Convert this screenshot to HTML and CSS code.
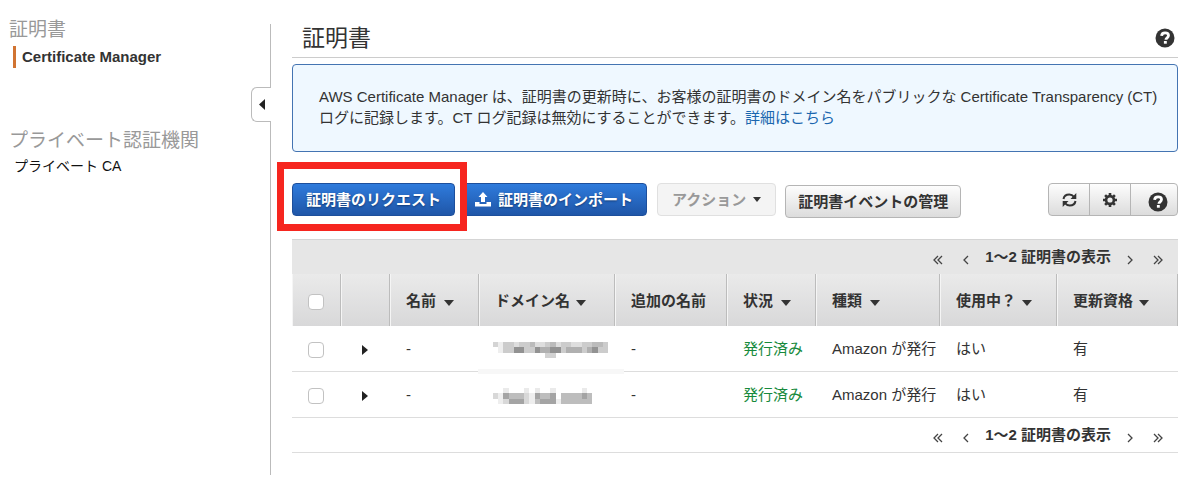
FILE: index.html
```html
<!DOCTYPE html>
<html lang="ja">
<head>
<meta charset="utf-8">
<title>Certificate Manager</title>
<link rel="stylesheet" href="styles.css">
</head>
<body>
<svg class="defs" aria-hidden="true">
  <symbol id="help" viewBox="0 0 20 20">
    <circle cx="10" cy="10" r="9.500" fill="#333"/>
    <path d="M6.600 7.900C6.700 5.800 8.100 4.800 10.100 4.800c2 0 3.400 1.100 3.400 2.800 0 2.200-2.600 2.300-2.600 4.200" fill="none" stroke="#fff" stroke-width="2.800"/>
    <rect x="8.900" y="13" width="2.900" height="2.700" fill="#fff"/>
  </symbol>
  <symbol id="caret" viewBox="0 0 10 6"><path d="M0 0h10L5 6z" fill="#333"/></symbol>
  <symbol id="right" viewBox="0 0 6 10"><path d="M0 0l6 5-6 5z" fill="#222"/></symbol>
  <symbol id="next" viewBox="0 0 6 10"><path d="M1 1l4 4-4 4" fill="none" stroke="#444" stroke-width="1.300"/></symbol>
  <symbol id="prev" viewBox="0 0 6 10"><path d="M5 1L1 5l4 4" fill="none" stroke="#444" stroke-width="1.300"/></symbol>
  <symbol id="last" viewBox="0 0 10 10"><path d="M1 1l4 4-4 4M5 1l4 4-4 4" fill="none" stroke="#444" stroke-width="1.300"/></symbol>
  <symbol id="first" viewBox="0 0 10 10"><path d="M5 1L1 5l4 4M9 1L5 5l4 4" fill="none" stroke="#444" stroke-width="1.300"/></symbol>
</svg>
<div class="page">
  <nav class="sidebar">
    <h2>証明書</h2>
    <a class="active" href="#">Certificate Manager</a>
    <h2 class="second">プライベート認証機関</h2>
    <a class="sub" href="#">プライベート CA</a>
  </nav>
  <button class="collapse" aria-label="サイドバーを閉じる"><svg width="6" height="11" viewBox="0 0 6 11"><path d="M6 0v11L0 5.500z" fill="#222"/></svg></button>
  <main class="main">
    <header class="title">
      <h1>証明書</h1>
      <button class="bare" aria-label="ヘルプ"><svg width="20" height="20"><use href="#help"/></svg></button>
    </header>
    <div class="notice">
      <p>AWS Certificate Manager は、証明書の更新時に、お客様の証明書のドメイン名をパブリックな Certificate Transparency (CT) ログに記録します。CT ログ記録は無効にすることができます。<a href="#">詳細はこちら</a></p>
    </div>
    <div class="toolbar">
      <div class="highlight"><button class="btn primary">証明書のリクエスト</button></div>
      <button class="btn primary"><svg width="16" height="15" viewBox="0 0 16 15"><path d="M8 0l4.500 5H10v5H6V5H3.500zM0 10h4.500v2h7v-2H16v4.500H0z" fill="#fff"/></svg>証明書のインポート</button>
      <button class="btn disabled" disabled>アクション<svg width="8" height="5"><use href="#caret"/></svg></button>
      <button class="btn events">証明書イベントの管理</button>
      <div class="tools">
        <button aria-label="更新"><svg width="15" height="14" viewBox="0 0 15 14"><path d="M1.500 6C2 3 4.500 1.500 7.300 1.500c2 0 3.500.8 4.700 2.300M13.500 8c-.5 3-3 4.500-5.800 4.500-2 0-3.500-.8-4.700-2.300" fill="none" stroke="#333" stroke-width="2"/><path d="M14.300 0v6H8.500zM.7 14V8h5.800z" fill="#333"/></svg></button>
        <button aria-label="設定"><svg width="14" height="14" viewBox="0 0 14 14"><circle cx="7" cy="7" r="3.900" fill="none" stroke="#333" stroke-width="2.600"/><path d="M7 0v3M7 11v3M0 7h3M11 7h3M2.100 2.100l2 2M9.900 9.900l2 2M2.100 11.900l2-2M9.900 4.100l2-2" stroke="#333" stroke-width="2.600"/></svg></button>
        <button class="wide" aria-label="ヘルプ"><svg width="20" height="20"><use href="#help"/></svg></button>
      </div>
    </div>
    <div class="pager top">
      <button class="bare" aria-label="最初"><svg width="10" height="10"><use href="#first"/></svg></button>
      <button class="bare" aria-label="前"><svg width="6" height="10"><use href="#prev"/></svg></button>
      <span>1〜2 証明書の表示</span>
      <button class="bare" aria-label="次"><svg width="6" height="10"><use href="#next"/></svg></button>
      <button class="bare" aria-label="最後"><svg width="10" height="10"><use href="#last"/></svg></button>
    </div>
    <table>
      <colgroup><col class="c-icon"><col class="c-icon"><col class="c-name"><col class="c-domain"><col class="c-extra"><col class="c-name"><col class="c-type"><col class="c-use"><col class="c-renew"></colgroup>
      <thead>
        <tr>
          <th><input type="checkbox" aria-label="すべて選択"></th>
          <th></th>
          <th>名前<svg width="10" height="6"><use href="#caret"/></svg></th>
          <th>ドメイン名<svg class="near" width="10" height="6"><use href="#caret"/></svg></th>
          <th>追加の名前</th>
          <th>状況<svg width="10" height="6"><use href="#caret"/></svg></th>
          <th>種類<svg width="10" height="6"><use href="#caret"/></svg></th>
          <th>使用中？<svg class="near" width="10" height="6"><use href="#caret"/></svg></th>
          <th>更新資格<svg class="near" width="10" height="6"><use href="#caret"/></svg></th>
        </tr>
      </thead>
      <tbody>
        <tr>
          <td><input type="checkbox" aria-label="証明書 1 を選択"></td>
          <td class="expand"><button class="bare" aria-label="展開"><svg width="6" height="10"><use href="#right"/></svg></button></td>
          <td>-</td>
          <td class="masked smudge"><svg width="115" height="16" viewBox="0 0 22 3" preserveAspectRatio="none" shape-rendering="crispEdges">
            <path d="M0 0h1v1H0z" fill="#d4d4d4"/><path d="M1 0h1v2H1z" fill="#eee"/><path d="M2 0h20v2H2z" fill="#ccc"/>
            <path d="M4 0h1v1H4zM8 0h2v1H8zM12 0h1v1h-1zM15 0h2v1h-2z" fill="#dedede"/><path d="M7 0h1v1H7zM11 0h1v1h-1zM19 0h2v1h-2z" fill="#bbb"/>
            <path d="M4 1h2v1H4zM8 1h1v1H8zM11 1h2v1h-2zM19 1h1v1h-1z" fill="#929292"/><path d="M9 1h2v1H9zM14 1h3v1h-3zM18 1h1v1h-1z" fill="#b0b0b0"/>
            <path d="M10 2h2v1h-2z" fill="#d2d2d2"/></svg></td>
          <td>-</td>
          <td class="ok">発行済み</td>
          <td>Amazon が発行</td>
          <td>はい</td>
          <td>有</td>
        </tr>
        <tr>
          <td><input type="checkbox" aria-label="証明書 2 を選択"></td>
          <td class="expand"><button class="bare" aria-label="展開"><svg width="6" height="10"><use href="#right"/></svg></button></td>
          <td>-</td>
          <td class="masked"><svg width="99" height="16" viewBox="0 0 19 3" preserveAspectRatio="none" shape-rendering="crispEdges">
            <path d="M2 0h1v1H2zM6 0h1v1H6zM8 0h1v1H8zM11 0h1v1h-1zM17 0h1v1h-1z" fill="#eaeaea"/>
            <path d="M0 1h1v1H0z" fill="#d8d8d8"/><path d="M1 1h1v2H1zM7 1h1v2H7zM12 2h1v1h-1z" fill="#eee"/>
            <path d="M2 1h5v2H2zM8 1h4v2H8zM13 1h6v2h-6z" fill="#bdbdbd"/><path d="M6 1h1v2H6zM2 2h1v1H2z" fill="#d8d8d8"/>
            <path d="M2 1h1v1H2zM8 1h1v1H8zM11 1h1v2h-1zM17 1h1v1h-1zM3 2h3v1H3zM9 2h2v1H9z" fill="#a4a4a4"/></svg></td>
          <td>-</td>
          <td class="ok">発行済み</td>
          <td>Amazon が発行</td>
          <td>はい</td>
          <td>有</td>
        </tr>
      </tbody>
    </table>
    <div class="pager">
      <button class="bare" aria-label="最初"><svg width="10" height="10"><use href="#first"/></svg></button>
      <button class="bare" aria-label="前"><svg width="6" height="10"><use href="#prev"/></svg></button>
      <span>1〜2 証明書の表示</span>
      <button class="bare" aria-label="次"><svg width="6" height="10"><use href="#next"/></svg></button>
      <button class="bare" aria-label="最後"><svg width="10" height="10"><use href="#last"/></svg></button>
    </div>
  </main>
</div>
</body>
</html>
```
FILE: styles.css
```css
* { box-sizing: border-box; }
body {
  margin: 0;
  background: #fff;
  color: #333;
  font: 15px/20px "Liberation Sans", "Noto Sans CJK JP", sans-serif;
}
button { font: inherit; color: inherit; cursor: pointer; }
svg { display: block; }
.defs { position: absolute; width: 0; height: 0; }
.bare { display: flex; padding: 0; border: 0; background: none; }

.page { display: flex; padding: 24px 22px 12px 0; }

.sidebar {
  flex: none;
  display: flex;
  flex-direction: column;
  align-items: flex-start;
  width: 270px;
  padding-left: 9px;
}
.sidebar h2 {
  margin: -7px 0 3px;
  color: #999;
  font-size: 19px;
  font-weight: 400;
  line-height: 26px;
}
.sidebar h2.second { margin: 60px 0 0; }
.sidebar a { color: #111; text-decoration: none; }
.sidebar a.active {
  margin-left: 4px;
  padding-left: 6px;
  border-left: 3px solid #d17432;
  color: #333;
  font-weight: 700;
  line-height: 22px;
}
.sidebar a.sub { margin-left: 5px; font-size: 14px; line-height: 24px; }

.collapse {
  display: flex;
  align-items: center;
  justify-content: flex-end;
  flex: none;
  width: 20px;
  height: 35px;
  margin: 63px -1px 0 -19px;
  padding: 0 6px 0 0;
  border: 1px solid #bbb;
  border-right: 0;
  border-radius: 6px 0 0 6px;
  background: #fff;
  position: relative;
}

.main {
  flex: 1;
  min-width: 0;
  min-height: 451px;
  padding-left: 21px;
  border-left: 1px solid #bbb;
}
.title {
  display: flex;
  align-items: center;
  justify-content: space-between;
  height: 34px;
  padding: 0 3px 6px 10px;
  border-bottom: 1px solid #ccc;
}
h1 { margin: 0; font-size: 23px; font-weight: 400; line-height: 28px; }

.notice {
  margin: 6px 0 31px;
  padding: 21px 12px 23px 26px;
  border: 1px solid #4474b2;
  border-radius: 4px;
  background: #eff8ff;
  line-height: 21px;
}
.notice p { margin: 0; }
.notice a { display: inline-block; color: #1a66ae; text-decoration: none; }

.toolbar { display: flex; align-items: flex-start; height: 56px; }
.btn {
  display: flex;
  align-items: center;
  justify-content: center;
  height: 33px;
  padding: 0 13px;
  border: 1px solid #b5b5b5;
  border-radius: 4px;
  background: linear-gradient(#fdfdfd, #dcdcdc);
  font-weight: 700;
  white-space: nowrap;
}
.btn.primary {
  gap: 7px;
  margin-right: 6px;
  border-color: #1d4f9c;
  background: linear-gradient(#2f7bdc, #1f56a8);
  color: #fff;
  text-shadow: 0 1px 2px #123a75;
}
.btn.disabled {
  gap: 7px;
  margin: 0 9px 0 4px;
  padding: 0 14px;
  border-color: #e0e0e0;
  background: #f4f4f4;
  color: #999;
}
.btn.events { margin-top: 2px; padding: 0 12px; }
.highlight { position: relative; }
.highlight::after {
  content: "";
  position: absolute;
  inset: -21px -6px -15px -15px;
  border: 7px solid #f6261f;
  pointer-events: none;
}
.tools {
  display: flex;
  height: 33px;
  margin-left: auto;
  border: 1px solid #b5b5b5;
  border-radius: 4px;
  background: linear-gradient(#fdfdfd, #dcdcdc);
}
.tools button {
  display: flex;
  align-items: center;
  justify-content: center;
  width: 41px;
  padding: 0;
  border: 0;
  border-right: 1px solid #b5b5b5;
  background: none;
}
.tools .wide { width: 46px; padding: 4px 0 0 8px; border-right: 0; }

.pager {
  display: flex;
  align-items: center;
  justify-content: flex-end;
  gap: 16px;
  height: 35px;
  padding-right: 15px;
  border-bottom: 1px solid #ddd;
  font-weight: 700;
}
.pager.top { border-top: 1px solid #d5d5d5; border-bottom: 0; background: #e6e6e6; }
.pager .bare { padding: 5px 0 0; }
.pager .bare:first-child { margin-right: 4px; }
.pager .bare:last-child { margin-left: 4px; }

table { width: 100%; table-layout: fixed; border-collapse: separate; border-spacing: 0; }
.c-icon { width: 49px; }
.c-name { width: 89px; }
.c-domain { width: 136px; }
.c-extra { width: 112px; }
.c-type { width: 124px; }
.c-use { width: 117px; }
.c-renew { width: 121px; }
th, td { padding: 0 0 0 16px; text-align: left; white-space: nowrap; }
th {
  height: 52px;
  padding-top: 2px;
  border-right: 1px solid #bcbcbc;
  background: linear-gradient(#eaeaea, #d8d8d9);
  box-shadow: inset 1px 0 #f5f5f5;
}
th svg { display: inline-block; margin-left: 8px; vertical-align: 0; }
th svg.near { margin-left: 6px; }
td { height: 46px; border-bottom: 1px solid #ddd; }
td.expand { padding: 3px 0 0 21px; }
td.ok { color: #178a3c; }
td.masked { position: relative; padding: 3px 0 0 14px; }
.smudge::after {
  content: "";
  position: absolute;
  inset: auto -9px -3px -1px;
  height: 5px;
  background: #f7f7f7;
}
input[type="checkbox"] {
  appearance: none;
  display: block;
  width: 16px;
  height: 16px;
  margin: 2px 0 0;
  border: 1px solid #c2c2c2;
  border-radius: 4px;
  background: #fff;
}
```
